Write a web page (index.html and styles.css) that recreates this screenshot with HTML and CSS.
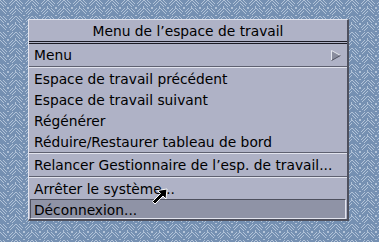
FILE: index.html
```html
<!DOCTYPE html>
<html lang="fr">
<head>
  <meta charset="UTF-8">
  <title>Menu de l'espace de travail</title>
  <link rel="stylesheet" href="styles.css">
</head>
<body>
  <div class="menu">
    <div class="menu-title">Menu de l’espace de travail</div>
    <div class="item submenu">
      <span>Menu</span>
      <svg class="arrow" width="10" height="11" viewBox="0 0 10 11">
        <polygon points="0.5,0.5 9.5,5.5 0.5,10.5" fill="#8a8d9e"/>
        <polyline points="0.5,10.5 0.5,0.5 9.5,5.5" fill="none" stroke="#e4e6ee" stroke-width="1"/>
        <line x1="9.5" y1="5.5" x2="0.5" y2="10.5" stroke="#505260" stroke-width="1"/>
      </svg>
    </div>
    <div class="sep"></div>
    <div class="item">Espace de travail précédent</div>
    <div class="item">Espace de travail suivant</div>
    <div class="item">Régénérer</div>
    <div class="item">Réduire/Restaurer tableau de bord</div>
    <div class="sep"></div>
    <div class="item tall">Relancer Gestionnaire de l’esp. de travail...</div>
    <div class="sep"></div>
    <div class="item">Arrêter le système...</div>
    <div class="item active">Déconnexion...</div>
  </div>

  <!-- pointeur de la souris -->
  <svg class="cursor" width="18" height="18" viewBox="0 0 18 18">
    <polygon points="16,1 15,11 12,8 4,16 1.5,13.5 9.5,5.5 6.5,2.5" fill="#000" stroke="#fff" stroke-width="1" stroke-linejoin="miter"/>
  </svg>
</body>
</html>
```

FILE: styles.css
```css
body {
  margin: 0;
  width: 379px;
  height: 242px;
  overflow: hidden;
  position: relative;
  font-family: "DejaVu Sans", sans-serif;
  font-size: 13.8px;
  color: #000;
  background-color: #7590b2;
  background-image: url("data:image/svg+xml;utf8,<svg xmlns='http://www.w3.org/2000/svg' width='16' height='16' shape-rendering='crispEdges'><g fill='%23b2c3d8'><rect x='0' y='0' width='1' height='1'/><rect x='1' y='1' width='1' height='1'/><rect x='2' y='2' width='1' height='1'/><rect x='3' y='3' width='1' height='1'/><rect x='4' y='4' width='1' height='1'/><rect x='5' y='5' width='1' height='1'/><rect x='3' y='0' width='1' height='1'/><rect x='4' y='1' width='1' height='1'/><rect x='5' y='2' width='1' height='1'/><rect x='6' y='3' width='1' height='1'/><rect x='0' y='3' width='1' height='1'/><rect x='1' y='4' width='1' height='1'/><rect x='2' y='5' width='1' height='1'/><rect x='3' y='6' width='1' height='1'/><rect x='15' y='8' width='1' height='1'/><rect x='14' y='9' width='1' height='1'/><rect x='13' y='10' width='1' height='1'/><rect x='12' y='11' width='1' height='1'/><rect x='11' y='12' width='1' height='1'/><rect x='10' y='13' width='1' height='1'/><rect x='12' y='8' width='1' height='1'/><rect x='11' y='9' width='1' height='1'/><rect x='10' y='10' width='1' height='1'/><rect x='9' y='11' width='1' height='1'/><rect x='15' y='11' width='1' height='1'/><rect x='14' y='12' width='1' height='1'/><rect x='13' y='13' width='1' height='1'/><rect x='12' y='14' width='1' height='1'/><rect x='15' y='0' width='1' height='1'/><rect x='14' y='1' width='1' height='1'/><rect x='13' y='2' width='1' height='1'/><rect x='12' y='3' width='1' height='1'/><rect x='11' y='4' width='1' height='1'/><rect x='10' y='5' width='1' height='1'/><rect x='12' y='0' width='1' height='1'/><rect x='11' y='1' width='1' height='1'/><rect x='10' y='2' width='1' height='1'/><rect x='9' y='3' width='1' height='1'/><rect x='0' y='8' width='1' height='1'/><rect x='1' y='9' width='1' height='1'/><rect x='2' y='10' width='1' height='1'/><rect x='3' y='11' width='1' height='1'/><rect x='4' y='12' width='1' height='1'/><rect x='5' y='13' width='1' height='1'/><rect x='3' y='8' width='1' height='1'/><rect x='4' y='9' width='1' height='1'/><rect x='5' y='10' width='1' height='1'/><rect x='6' y='11' width='1' height='1'/><rect x='7' y='7' width='2' height='2'/><rect x='7' y='15' width='2' height='1'/><rect x='15' y='6' width='1' height='2'/></g></svg>");
  background-size: 16px 16px;
}

.menu {
  margin: 19px 0 0 28px;
  width: 318px;
  background: #afb2c6;
  border-top: 1px solid #e2e4ee;
  border-left: 1px solid #e2e4ee;
  border-right: 2px solid #4e505e;
  border-bottom: 2px solid #4e505e;
}

.menu-title {
  height: 21px;
  line-height: 22px;
  text-align: center;
  border-bottom: 3px double #1a1a24;
}

.item {
  height: 21px;
  line-height: 23px;
  padding-left: 5px;
  white-space: nowrap;
}

.submenu,
.tall {
  height: 22px;
}

.submenu {
  display: flex;
  justify-content: space-between;
  align-items: center;
  padding-right: 6px;
}

.sep {
  height: 0;
  border-top: 1px solid #5e6070;
  border-bottom: 1px solid #e2e4ee;
}

.active {
  margin: 0 1px;
  padding-left: 3px;
  height: 18px;
  line-height: 20px;
  background: #8f93a6;
  border-top: 1px solid #4e505e;
  border-left: 1px solid #4e505e;
  border-right: 1px solid #e2e4ee;
  border-bottom: 1px solid #e2e4ee;
}

.cursor {
  position: absolute;
  left: 151px;
  top: 188px;
}
```
